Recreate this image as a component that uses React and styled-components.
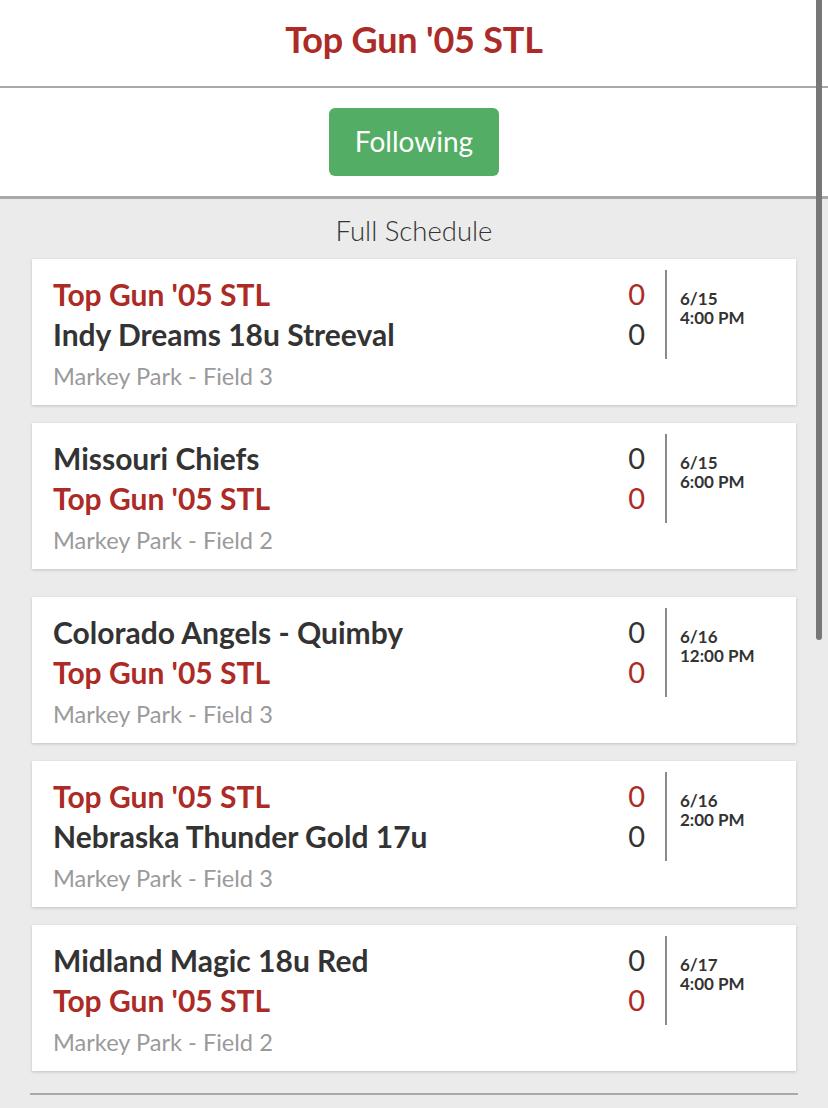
import React from "react";
import styled, { createGlobalStyle } from "styled-components";

const GlobalStyle = createGlobalStyle`
  html, body { margin: 0; padding: 0; background: #ebebeb; }
  body { font-family: Lato, "Open Sans", "Liberation Sans", sans-serif; color: #333; }
  * { box-sizing: border-box; }
`;

const RED = "#ac2b26";

const Page = styled.div`
  position: relative;
  width: 828px;
  min-height: 1108px;
  background: #ebebeb;
  overflow: hidden;
`;

const Header = styled.header`
  background: #fff;
  height: 88px;
  border-bottom: 2px solid #a9a9a9;
  display: flex;
  align-items: center;
  justify-content: center;
  padding-bottom: 8px;
`;

const Title = styled.h1`
  margin: 0;
  color: ${RED};
  font-size: 36px;
  font-weight: 700;
  letter-spacing: -0.2px;
`;

const FollowBar = styled.div`
  background: #fff;
  height: 111px;
  border-bottom: 3px solid #a9a9a9;
  display: flex;
  justify-content: center;
  padding-top: 20px;
`;

const FollowButton = styled.button`
  width: 170px;
  height: 68px;
  background: #53ad64;
  border: none;
  border-radius: 6px;
  color: #fff;
  font-family: inherit;
  font-size: 28px;
  font-weight: 400;
  padding: 0 0 3px;
`;

const Schedule = styled.section`
  padding: 14px 32px 0;
  display: flex;
  flex-direction: column;
`;

const SectionTitle = styled.div`
  text-align: center;
  font-size: 27.5px;
  font-weight: 300;
  color: #333;
  line-height: 36px;
  margin-bottom: 10px;
`;

const Card = styled.div`
  background: #fff;
  height: 146px;
  margin-top: ${(p) => p.$gap}px;
  box-shadow: 0 1px 3px rgba(0, 0, 0, 0.18);
  display: flex;
  padding: 15px 0 0 21px;
`;

const Teams = styled.div`
  flex: 1;
  display: flex;
  flex-direction: column;
`;

const Team = styled.div`
  font-size: 30px;
  font-weight: 700;
  line-height: 40px;
  color: ${(p) => (p.$home ? RED : "#333")};
`;

const Venue = styled.div`
  font-size: 23.6px;
  font-weight: 400;
  color: #9a9a9a;
  line-height: 30px;
  margin-top: 7px;
`;

const Scores = styled.div`
  width: 40px;
  text-align: right;
  display: flex;
  flex-direction: column;
`;

const Score = styled.div`
  font-size: 29px;
  font-weight: 400;
  line-height: 40px;
  color: ${(p) => (p.$home ? RED : "#333")};
`;

const Divider = styled.div`
  width: 2px;
  height: 89px;
  background: #8a8a8a;
  margin: -4px 0 0 20px;
`;

const When = styled.div`
  width: 129px;
  padding: 15px 0 0 13px;
  font-size: 17px;
  font-weight: 700;
  line-height: 19px;
  color: #333;
`;

const WhenLine = styled.div`
  white-space: nowrap;
`;

const BottomRule = styled.hr`
  margin: 22px -2px 0;
  border: none;
  border-top: 2px solid #a9a9a9;
`;

const Scrollbar = styled.div`
  position: absolute;
  top: 0;
  right: 6px;
  width: 6px;
  height: 640px;
  background: #777;
  border-radius: 0 0 3px 3px;
`;

const games = [
  { a: "Top Gun '05 STL", b: "Indy Dreams 18u Streeval", homeFirst: true, field: "Markey Park - Field 3", date: "6/15", time: "4:00 PM", gap: 0 },
  { a: "Missouri Chiefs", b: "Top Gun '05 STL", homeFirst: false, field: "Markey Park - Field 2", date: "6/15", time: "6:00 PM", gap: 18 },
  { a: "Colorado Angels - Quimby", b: "Top Gun '05 STL", homeFirst: false, field: "Markey Park - Field 3", date: "6/16", time: "12:00 PM", gap: 28 },
  { a: "Top Gun '05 STL", b: "Nebraska Thunder Gold 17u", homeFirst: true, field: "Markey Park - Field 3", date: "6/16", time: "2:00 PM", gap: 18 },
  { a: "Midland Magic 18u Red", b: "Top Gun '05 STL", homeFirst: false, field: "Markey Park - Field 2", date: "6/17", time: "4:00 PM", gap: 18 },
];

export default function App() {
  return (
    <Page>
      <GlobalStyle />
      <Header>
        <Title>Top Gun '05 STL</Title>
      </Header>
      <FollowBar>
        <FollowButton>Following</FollowButton>
      </FollowBar>
      <Schedule>
        <SectionTitle>Full Schedule</SectionTitle>
        {games.map((g, i) => (
          <Card key={i} $gap={g.gap}>
            <Teams>
              <Team $home={g.homeFirst}>{g.a}</Team>
              <Team $home={!g.homeFirst}>{g.b}</Team>
              <Venue>{g.field}</Venue>
            </Teams>
            <Scores>
              <Score $home={g.homeFirst}>0</Score>
              <Score $home={!g.homeFirst}>0</Score>
            </Scores>
            <Divider />
            <When>
              <WhenLine>{g.date}</WhenLine>
              <WhenLine>{g.time}</WhenLine>
            </When>
          </Card>
        ))}
        <BottomRule />
      </Schedule>
      <Scrollbar />
    </Page>
  );
}
